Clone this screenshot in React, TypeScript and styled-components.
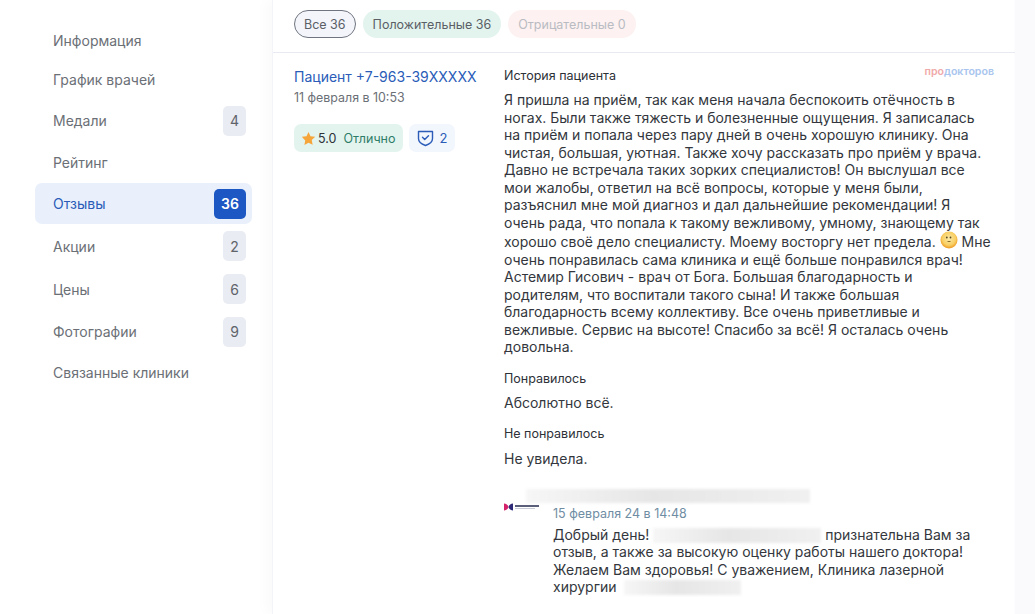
import React from "react";
import styled, { createGlobalStyle } from "styled-components";

const GlobalStyle = createGlobalStyle`
  html, body {
    margin: 0;
    padding: 0;
    background: #fff;
    font-family: Inter, "Noto Sans", sans-serif;
    overflow: hidden;
  }
`;

const Page = styled.div`
  width: 1035px;
  height: 614px;
  display: flex;
  overflow: hidden;
  background: linear-gradient(90deg, #fff 1014px, #fafafd 1015px);
`;

const Sidebar = styled.nav`
  width: 217px;
  margin-left: 35px;
  margin-right: 20px;
  padding-top: 21px;
  display: flex;
  flex-direction: column;
  flex-shrink: 0;
`;

const NavItem = styled.div<{ $active?: boolean; $h: number }>`
  height: ${(p) => p.$h}px;
  padding: 0 6px 0 18px;
  display: flex;
  align-items: center;
  justify-content: space-between;
  border-radius: 7px;
  font-size: 14px;
  color: ${(p) => (p.$active ? "#2a5cb8" : "#6b6f76")};
  background: ${(p) => (p.$active ? "#e9f0fb" : "transparent")};
`;

const Count = styled.span<{ $active?: boolean }>`
  min-width: ${(p) => (p.$active ? 32 : 23)}px;
  height: 30px;
  border-radius: 5px;
  display: flex;
  align-items: center;
  justify-content: center;
  font-size: 14px;
  font-weight: ${(p) => (p.$active ? 600 : 400)};
  color: ${(p) => (p.$active ? "#fff" : "#5f636a")};
  background: ${(p) => (p.$active ? "#1c57c4" : "#e9ecf3")};
`;

const Card = styled.main`
  width: 742px;
  flex-shrink: 0;
  box-shadow: -6px 0 12px rgba(40, 50, 90, 0.025);
  border-left: 1px solid #f3f4f8;
`;

const Tabs = styled.div`
  height: 53px;
  box-sizing: border-box;
  padding: 10px 0 0 21px;
  display: flex;
  align-items: flex-start;
  gap: 7px;
  border-bottom: 1px solid #e8eaf2;
`;

const Tab = styled.div<{ $kind: "all" | "good" | "bad" }>`
  height: 28px;
  box-sizing: border-box;
  padding: 0 ${(p) => (p.$kind === "all" ? 9 : 10)}px;
  border-radius: 14px;
  display: flex;
  align-items: center;
  font-size: 12.5px;
  color: ${(p) => (p.$kind === "bad" ? "#b9bcc2" : "#5a5f66")};
  background: ${(p) =>
    p.$kind === "all" ? "#f3f5fa" : p.$kind === "good" ? "#e3f4ee" : "#fdf1f1"};
  border: ${(p) => (p.$kind === "all" ? "1px solid #6f7480" : "none")};
`;

const Review = styled.section`
  display: flex;
  padding: 15px 0 0 21px;
`;

const Author = styled.div`
  width: 210px;
  flex-shrink: 0;
`;

const Name = styled.div`
  font-size: 14px;
  line-height: 17px;
  color: #2a5cb8;
`;

const DateLine = styled.div`
  margin-top: 5px;
  font-size: 12.4px;
  line-height: 16px;
  color: #6b6f76;
`;

const Badges = styled.div`
  margin-top: 18px;
  display: flex;
  gap: 6px;
`;

const Score = styled.div`
  height: 28px;
  padding: 0 7px;
  border-radius: 7px;
  display: flex;
  align-items: center;
  background: #e3f4ee;
  font-size: 12.5px;
  color: #2d3138;
`;

const ScoreLabel = styled.span`
  margin-left: 7px;
  color: #2e7d68;
  font-size: 12.5px;
`;

const Shield = styled.div`
  height: 28px;
  padding: 0 8px 0 8px;
  border-radius: 7px;
  display: flex;
  align-items: center;
  gap: 6px;
  background: #f2f6fd;
  font-size: 13px;
  color: #2a5cb8;
`;

const Body = styled.div`
  position: relative;
  width: 488px;
  flex-shrink: 0;
`;

const Brand = styled.div`
  position: absolute;
  top: -3px;
  right: -2px;
  font-size: 10.6px;
  font-weight: 600;
  line-height: 14px;
  color: #a9c5ee;
`;

const BrandAccent = styled.span`
  color: #f0a9a9;
`;

const Caption = styled.div`
  font-size: 12.5px;
  line-height: 16px;
  color: #2d3138;
`;

const Text = styled.p<{ $top: number }>`
  margin: ${(p) => p.$top}px 0 0;
  font-size: 14px;
  line-height: 17.5px;
  color: #33373d;
`;

const Section = styled.div<{ $top: number }>`
  margin-top: ${(p) => p.$top}px;
`;

const Reply = styled.div`
  position: relative;
  margin-top: 21px;
  padding-left: 49px;
  width: 440px;
`;

const ReplyHeader = styled.div`
  height: 14px;
`;

const ReplyLogo = styled.svg`
  position: absolute;
  left: 0;
  top: 14px;
`;

const ReplyDate = styled.div`
  margin-top: 3px;
  font-size: 12.5px;
  line-height: 16px;
  color: #6f8da3;
`;

const Smudge = styled.span<{ $w: number; $h: number; $left?: number }>`
  display: inline-block;
  width: ${(p) => p.$w}px;
  height: ${(p) => p.$h}px;
  margin-left: ${(p) => p.$left ?? 0}px;
  vertical-align: -3px;
  background: linear-gradient(90deg, #f6f6f6, #e6e6e6 45%, #f0f0f0);
  filter: blur(1.5px);
`;

const HeaderSmudge = styled(Smudge)`
  display: block;
  margin-left: -27px;
`;

const Emoji = styled.svg`
  vertical-align: -2px;
`;

const menu = [
  { label: "Информация", h: 38 },
  { label: "График врачей", h: 41 },
  { label: "Медали", count: 4, h: 41 },
  { label: "Рейтинг", h: 42 },
  { label: "Отзывы", count: 36, active: true, h: 41 },
  { label: "Акции", count: 2, h: 44 },
  { label: "Цены", count: 6, h: 42 },
  { label: "Фотографии", count: 9, h: 43 },
  { label: "Связанные клиники", h: 39 },
];

export default function App() {
  return (
    <Page>
      <GlobalStyle />
      <Sidebar>
        {menu.map((item) => (
          <NavItem key={item.label} $active={item.active} $h={item.h}>
            {item.label}
            {item.count !== undefined && (
              <Count $active={item.active}>{item.count}</Count>
            )}
          </NavItem>
        ))}
      </Sidebar>
      <Card>
        <Tabs>
          <Tab $kind="all">Все 36</Tab>
          <Tab $kind="good">Положительные 36</Tab>
          <Tab $kind="bad">Отрицательные 0</Tab>
        </Tabs>
        <Review>
          <Author>
            <Name>Пациент +7-963-39XXXXX</Name>
            <DateLine>11 февраля в 10:53</DateLine>
            <Badges>
              <Score>
                <svg width="15" height="15" viewBox="0 0 24 24" style={{ marginRight: 2 }}>
                  <path
                    fill="#f6a53a"
                    d="M12 1.500l3.200 6.900 7.500.9-5.500 5.200 1.400 7.500L12 18.800l-6.600 3.700 1.400-7.500L1.300 9.300l7.500-.9z"
                  />
                </svg>
                5.0
                <ScoreLabel>Отлично</ScoreLabel>
              </Score>
              <Shield>
                <svg width="17" height="18" viewBox="0 0 17 18" fill="none" stroke="#2a5cb8" strokeWidth="1.4">
                  <path d="M1.500 2.500h14v7.200c0 3.200-3.200 5.400-7 6.800-3.800-1.400-7-3.600-7-6.800z" strokeLinejoin="round" />
                  <path d="M5.500 8.300l2.200 2.200 3.800-3.800" strokeLinecap="round" strokeLinejoin="round" />
                </svg>
                2
              </Shield>
            </Badges>
          </Author>
          <Body>
            <Brand>
              <BrandAccent>про</BrandAccent>докторов
            </Brand>
            <Caption>История пациента</Caption>
            <Text $top={7}>
              Я пришла на приём, так как меня начала беспокоить отёчность в ногах. Были также
              тяжесть и болезненные ощущения. Я записалась на приём и попала через пару дней в
              очень хорошую клинику. Она чистая, большая, уютная. Также хочу рассказать про приём
              у врача. Давно не встречала таких зорких специалистов! Он выслушал все мои жалобы,
              ответил на всё вопросы, которые у меня были, разъяснил мне мой диагноз и дал
              дальнейшие рекомендации! Я очень рада, что попала к такому вежливому, умному,
              знающему так
              <br />
              хорошо своё дело специалисту. Моему восторгу нет предела.{" "}
              <Emoji width="18" height="18" viewBox="0 0 18 18">
                <defs>
                  <radialGradient id="face" cx="50%" cy="42%" r="55%">
                    <stop offset="0%" stopColor="#fbe9a6" />
                    <stop offset="70%" stopColor="#f8cf63" />
                    <stop offset="100%" stopColor="#ef9f28" />
                  </radialGradient>
                </defs>
                <circle cx="9" cy="9" r="8.500" fill="url(#face)" />
                <circle cx="6.800" cy="6.500" r="0.900" fill="#5d4a22" />
                <circle cx="10.500" cy="6.500" r="0.900" fill="#5d4a22" />
                <path d="M7.500 10.500h3" stroke="#8a6d2a" strokeWidth="1" />
              </Emoji>{" "}
              Мне
              <br />
              очень понравилась сама клиника и ещё больше понравился врач! Астемир Гисович -
              врач от Бога. Большая благодарность и родителям, что воспитали такого сына! И также
              большая благодарность всему коллективу. Все очень приветливые и вежливые. Сервис на
              высоте! Спасибо за всё! Я осталась очень довольна.
            </Text>
            <Section $top={15}>
              <Caption>Понравилось</Caption>
              <Text $top={7}>Абсолютно всё.</Text>
            </Section>
            <Section $top={15}>
              <Caption>Не понравилось</Caption>
              <Text $top={8}>Не увидела.</Text>
            </Section>
            <Reply>
              <ReplyHeader>
                <HeaderSmudge $w={284} $h={14} />
              </ReplyHeader>
              <ReplyLogo width="35" height="8" viewBox="0 0 35 8">
                <path d="M0 .5c2 0 4 1.500 4.500 3.500C4 6 2 7.500 0 7.500z" fill="#d4226b" />
                <path d="M9 .5C7 .5 5 2 4.500 4 5 6 7 7.500 9 7.500z" fill="#2f2a78" />
                <rect x="11" y="2" width="24" height="2" fill="#5b5f7a" />
                <rect x="11" y="5" width="20" height="1" fill="#c9cbd6" />
              </ReplyLogo>
              <ReplyDate>15 февраля 24 в 14:48</ReplyDate>
              <Text $top={4}>
                Добрый день! <Smudge $w={168} $h={15} /> признательна Вам за
                <br />
                отзыв, а также за высокую оценку работы нашего доктора! Желаем Вам здоровья! С
                уважением, Клиника лазерной хирургии <Smudge $w={117} $h={15} $left={4} />
              </Text>
            </Reply>
          </Body>
        </Review>
      </Card>
    </Page>
  );
}
